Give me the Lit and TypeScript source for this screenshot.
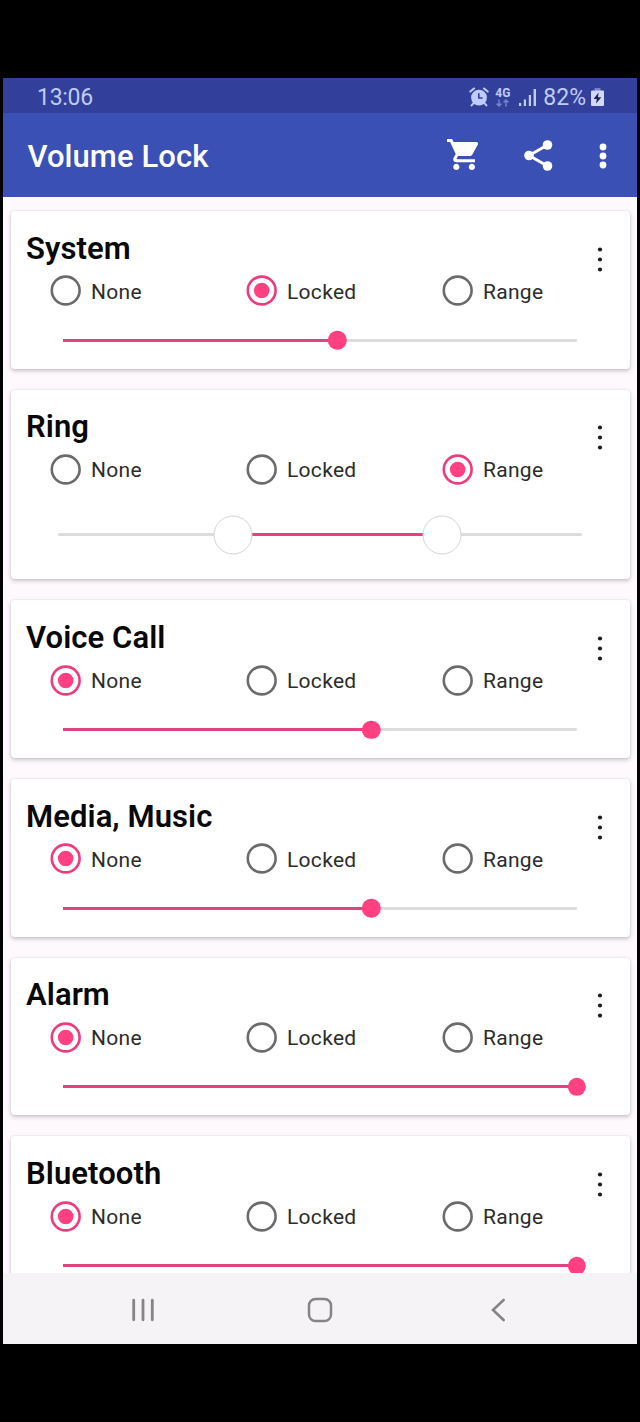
import { LitElement, html, css, svg } from 'lit'
import { customElement, property } from 'lit/decorators.js'
import { classMap } from 'lit/directives/class-map.js'

type Mode = 'None' | 'Locked' | 'Range';

interface Channel {
  name: string;
  mode: Mode;
  from?: number;
  to: number;
}

const MODES: Mode[] = ['None', 'Locked', 'Range'];

const CHANNELS: Channel[] = [
  { name: 'System', mode: 'Locked', to: 8 / 15 },
  { name: 'Ring', mode: 'Range', from: 5 / 15, to: 11 / 15 },
  { name: 'Voice Call', mode: 'None', to: 9 / 15 },
  { name: 'Media, Music', mode: 'None', to: 9 / 15 },
  { name: 'Alarm', mode: 'None', to: 1 },
  { name: 'Bluetooth', mode: 'None', to: 1 },
];

@customElement('volume-slider')
export class VolumeSlider extends LitElement {
  @property({type: Number}) from = -1;
  @property({type: Number}) to = 0;

  static styles = css`
    :host {
      display: block;
    }

    .track {
      position: relative;
      height: 3px;
      border-radius: 1px;
      background: #dcdcdc;
    }

    .fill {
      position: absolute;
      top: 0;
      height: 100%;
      background: #e0437f;
    }

    .thumb {
      position: absolute;
      top: 50%;
      box-sizing: border-box;
      width: 18.4px;
      height: 18.4px;
      border-radius: 50%;
      background: #ff4081;
      transform: translate(-50%, -50%);
    }

    .thumb.hollow {
      width: 39px;
      height: 39px;
      border: 1.4px solid #d4d4d4;
      background: #fff;
    }
  `

  render() {
    const isRange = this.from >= 0;
    const start = isRange ? this.from : 0;
    const thumbs = isRange ? [this.from, this.to] : [this.to];

    return html`
      <div class="track">
        <div class="fill" style="left: ${start * 100}%; width: ${(this.to - start) * 100}%"></div>
        ${thumbs.map(pos => html`
          <div class=${classMap({ thumb: true, hollow: isRange })} style="left: ${pos * 100}%"></div>
        `)}
      </div>
    `
  }
}

@customElement('volume-card')
export class VolumeCard extends LitElement {
  @property({type: Object}) channel: Channel = CHANNELS[0];

  static styles = css`
    :host {
      display: block;
      flex: none;
      box-sizing: border-box;
      height: 157.7px;
      border-radius: 4px;
      background: #fff;
      box-shadow: 0 2px 4px rgba(60, 50, 60, 0.26), 0 0 2px rgba(60, 50, 60, 0.12);
    }

    :host([range]) {
      height: 189.7px;
    }

    .top {
      display: flex;
      height: 98px;
    }

    .main {
      flex: 1;
      padding-top: 19.6px;
    }

    h2 {
      margin: 0;
      padding-left: 15.5px;
      font-size: 31px;
      font-weight: 600;
      letter-spacing: 0.08px;
      line-height: 36px;
      color: #080808;
    }

    .modes {
      display: grid;
      grid-template-columns: repeat(3, 196px);
      width: 520px;
      margin-top: 8.8px;
      padding-left: 39.8px;
    }

    .mode {
      display: flex;
      align-items: center;
      gap: 9.6px;
      height: 31px;
      font-size: 21px;
      letter-spacing: 0.32px;
      color: #2c2c2c;
    }

    .mode span {
      padding-top: 1.6px;
    }

    .radio {
      fill: none;
      stroke: #6b6b6b;
      stroke-width: 2.6;
    }

    .radio.checked {
      stroke: #ee3b7d;
    }

    .dot {
      fill: #ff4081;
      stroke: none;
    }

    .more {
      width: 59px;
      padding-top: 34.5px;
      text-align: center;
    }

    .more svg {
      display: block;
      margin: 0 auto;
    }

    volume-slider {
      margin: 29.7px 52.5px 0 52.5px;
    }

    :host([range]) volume-slider {
      margin: 45.7px 48px 0 47.5px;
    }
  `

  render() {
    const { name, mode, from, to } = this.channel;

    return html`
      <div class="top">
        <div class="main">
          <h2>${name}</h2>
          <div class="modes">
            ${MODES.map(m => html`
              <div class="mode">
                <svg class=${classMap({ radio: true, checked: m === mode })} width="31" height="31" viewBox="0 0 31 31">
                  <circle cx="15.7" cy="15.5" r="13.9"/>
                  ${m === mode ? svg`<circle class="dot" cx="15.7" cy="15.5" r="7.8"/>` : ''}
                </svg>
                <span>${m}</span>
              </div>
            `)}
          </div>
        </div>
        <div class="more">
          <svg width="6" height="27" viewBox="0 0 6 27" fill="#1c1c1c">
            <circle cx="3" cy="3.5" r="2.1"/>
            <circle cx="3" cy="13.5" r="2.1"/>
            <circle cx="3" cy="23.5" r="2.1"/>
          </svg>
        </div>
      </div>
      <volume-slider .from=${from ?? -1} .to=${to}></volume-slider>
    `
  }
}

@customElement('app-root')
export class AppRoot extends LitElement {
  static styles = css`
    :host {
      display: flex;
      flex-direction: column;
      box-sizing: border-box;
      width: 640px;
      height: 1422px;
      padding: 78px 3px;
      overflow: hidden;
      background: #000;
      font-family: Roboto, 'Noto Sans', sans-serif;
    }

    svg {
      display: block;
    }

    .status {
      display: flex;
      align-items: center;
      box-sizing: border-box;
      height: 35px;
      padding: 3px 33px 0 34px;
      background: #32409b;
      color: #c0cbf8;
      font-size: 23px;
    }

    .time {
      flex: 1;
      letter-spacing: -0.3px;
    }

    .alarm {
      margin-right: 6px;
    }

    .network {
      display: flex;
      flex-direction: column;
      align-items: center;
      width: 15px;
      margin-right: 9px;
      font-size: 12px;
      font-weight: 700;
      line-height: 11px;
    }

    .signal {
      margin-right: 7px;
    }

    .percent {
      margin-right: 5px;
    }

    .bar {
      display: flex;
      align-items: center;
      box-sizing: border-box;
      height: 84px;
      padding: 2px 30.5px 0 24.5px;
      background: #3b50b5;
      color: #fff;
    }

    h1 {
      flex: 1;
      margin: 0;
      font-size: 31px;
      font-weight: 500;
      letter-spacing: 0.08px;
    }

    .cart {
      margin-top: -2px;
    }

    .share {
      margin: -2px 45.5px 0 45px;
    }

    .overflow {
      margin-top: -1px;
    }

    .list {
      display: flex;
      flex-direction: column;
      flex: 1;
      gap: 21px;
      min-height: 0;
      padding: 14px 7.5px 0;
      overflow: hidden;
      background: #fdf9fd;
    }

    .nav {
      display: grid;
      grid-template-columns: repeat(3, 177.5px);
      justify-content: center;
      align-items: center;
      justify-items: center;
      height: 71px;
      padding-top: 3px;
      box-sizing: border-box;
      background: #f6f3f7;
    }
  `

  private _arrow(x: number, up: boolean) {
    return up
      ? svg`<path d="M${x} 7.5V1M${x - 2.4} 3.4L${x} 1l2.4 2.4"/>`
      : svg`<path d="M${x} .5V7M${x - 2.4} 4.6L${x} 7l2.4 -2.4"/>`
  }

  render() {
    return html`
      <div class="status">
        <span class="time">13:06</span>
        <svg class="alarm" width="20" height="20" viewBox="0 0 20 20">
          <g fill="none" stroke="#c0cbf8" stroke-width="2" stroke-linecap="round">
            <path d="M1.3 4.6L5 1.5M18.7 4.6L15 1.5M4.6 16.2L2.6 18.4M15.4 16.2L17.4 18.4"/>
          </g>
          <circle cx="10" cy="10.6" r="7.9" fill="#c0cbf8"/>
          <path d="M9.8 6.2V11H13.6" fill="none" stroke="#32409b" stroke-width="1.6"/>
        </svg>
        <span class="network">
          4G
          <svg width="13" height="8" viewBox="0 0 13 8" fill="none" stroke="#7482cd" stroke-width="1.5">
            ${this._arrow(3, false)}
            ${this._arrow(10, true)}
          </svg>
        </span>
        <svg class="signal" width="17" height="17" viewBox="0 0 17 17" fill="#c0cbf8">
          <rect x="0" y="14" width="2.2" height="3"/>
          <rect x="4.8" y="10.5" width="2.2" height="6.5"/>
          <rect x="9.8" y="6" width="2.2" height="11"/>
          <rect x="14.6" y="0" width="2.4" height="17"/>
        </svg>
        <span class="percent">82%</span>
        <svg width="13" height="18" viewBox="0 0 13 18">
          <rect x="3.5" y="0" width="6" height="3" fill="#7482cd"/>
          <rect x="0" y="2.5" width="13" height="15.5" rx="1" fill="#d2d8f6"/>
          <path d="M7.6 4.6L2.6 11H5.8L5 15.6L10.4 9.2H7Z" fill="#1c2350"/>
        </svg>
      </div>
      <div class="bar">
        <h1>Volume Lock</h1>
        <svg class="cart" width="32" height="32" viewBox="1 2 20.6 20.6" fill="#fff">
          <path d="M7 18c-1.1 0-1.99.9-1.99 2S5.9 22 7 22s2-.9 2-2-.9-2-2-2zM1 2v2h2l3.6 7.59-1.35 2.45c-.16.28-.25.61-.25.96 0 1.1.9 2 2 2h12v-2H7.42c-.14 0-.25-.11-.25-.25l.03-.12.9-1.63h7.45c.75 0 1.41-.41 1.75-1.03l3.58-6.49A1.003 1.003 0 0 0 20 4H5.21l-.94-2H1zm16 16c-1.1 0-1.99.9-1.99 2s.89 2 1.99 2 2-.9 2-2-.9-2-2-2z"/>
        </svg>
        <svg class="share" width="29" height="31" viewBox="0 0 29 31" fill="#fff">
          <path d="M5 15.5L23.5 5M5 15.5L23.5 26" fill="none" stroke="#fff" stroke-width="3"/>
          <circle cx="5" cy="15.5" r="4.8"/>
          <circle cx="23.5" cy="5" r="4.8"/>
          <circle cx="23.5" cy="26" r="4.8"/>
        </svg>
        <svg class="overflow" width="8" height="26" viewBox="0 0 8 26" fill="#fff">
          <circle cx="4" cy="4" r="3.4"/>
          <circle cx="4" cy="13" r="3.4"/>
          <circle cx="4" cy="22" r="3.4"/>
        </svg>
      </div>
      <div class="list">
        ${CHANNELS.map(c => html`
          <volume-card .channel=${c} ?range=${c.mode === 'Range'}></volume-card>
        `)}
      </div>
      <div class="nav">
        <svg width="24" height="24" viewBox="0 0 24 24" stroke="#868487" stroke-width="2.8" stroke-linecap="round">
          <path d="M2.7 2.2V21.8M12 2.2V21.8M21.3 2.2V21.8"/>
        </svg>
        <svg width="26" height="26" viewBox="0 0 26 26" fill="none" stroke="#868487" stroke-width="2.5">
          <rect x="2" y="2" width="22" height="22" rx="6.5"/>
        </svg>
        <svg width="14" height="24" viewBox="0 0 14 24" fill="none" stroke="#868487" stroke-width="2.6" stroke-linecap="round">
          <path d="M12.6 2L2 12L12.6 22"/>
        </svg>
      </div>
    `
  }
}
